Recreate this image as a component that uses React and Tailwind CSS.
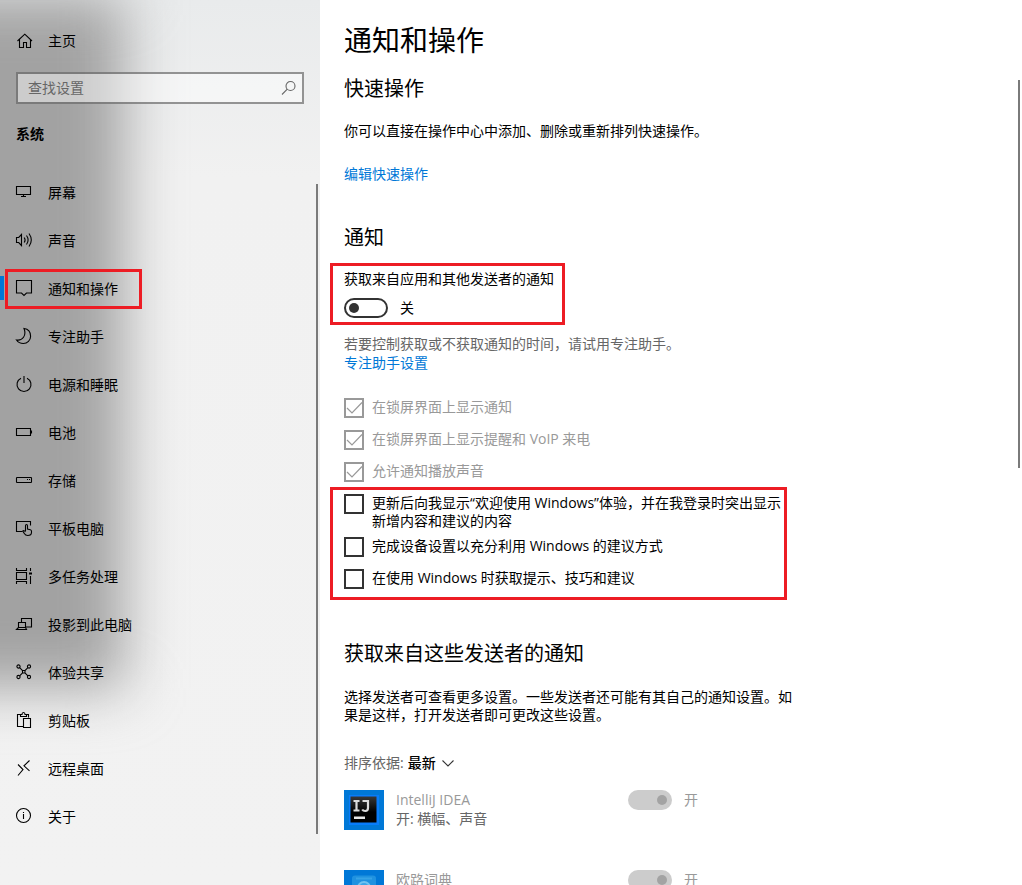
import React from "react";

function Icon({ children, className = "" }) {
  return (
    <svg
      viewBox="0 0 16 16"
      className={`size-4 shrink-0 overflow-visible ${className}`}
      fill="none"
      stroke="currentColor"
      strokeWidth="1.1"
      aria-hidden="true"
    >
      {children}
    </svg>
  );
}

const navItems = [
  {
    label: "屏幕",
    icon: <path d="M.5 2.5h14v8H.5zM7.5 10.5v2M5 12.5h5" />,
  },
  {
    label: "声音",
    icon: (
      <path d="M.5 5.5h2.200L5.500 2.500v11L2.700 10.500H.5zM8.200 5.500q1.800 2.500 0 5M10.500 3.500q3.200 4.500 0 9M13 1.500q4.600 6.500 0 13" />
    ),
  },
  {
    label: "通知和操作",
    current: true,
    icon: <path d="M.5.5h15v12.500h-5L8 15.500 5.500 13H.5z" />,
  },
  {
    label: "专注助手",
    icon: (
      <path d="M8 .5C12 1 14.600 4 14.600 8.200c0 4.300-3.200 7.300-7.300 7.300-2.700 0-5.200-1.200-6.800-3.500C6.500 13 10.800 7.500 8 .5z" />
    ),
  },
  {
    label: "电源和睡眠",
    icon: (
      <>
        <path d="M5 2.200a7 7 0 1 0 6 0" />
        <path d="M8 0v7" />
      </>
    ),
  },
  {
    label: "电池",
    icon: <path d="M.5 4.500h14v7H.5zM15.500 6.500v3" />,
  },
  {
    label: "存储",
    icon: (
      <>
        <rect x=".5" y="5.500" width="15" height="5" rx=".6" />
        <path d="M11 7.500h1M13 7.500h1" />
      </>
    ),
  },
  {
    label: "平板电脑",
    icon: (
      <>
        <path d="M6.500 11.500h-6v-10h14v4" />
        <path d="M9.500 11V5.700q0-1.200 1-1.200t1 1.200v3.300l2.800.7q1.200.3 1.200 1.500v1q0 3.300-3.800 3.300-2.200 0-3.400-2L6.800 11q1.200-1 2.700.8" />
      </>
    ),
  },
  {
    label: "多任务处理",
    icon: (
      <>
        <path d="M.5 0v2.500h10V0M.5 16v-2.500h10V16M.5 4.500h10v7H.500zM14.500 0v3M14.500 8v8" />
        <path d="M13 4.500h3v2h-3z" fill="currentColor" stroke="none" />
      </>
    ),
  },
  {
    label: "投影到此电脑",
    icon: (
      <path d="M5.500 6V2.500h10v8.500H10M2.500 6.500h7v5h-7zM2.500 11.500l-2 2h10l-1-2" />
    ),
  },
  {
    label: "体验共享",
    icon: (
      <>
        <circle cx="2.500" cy="2.500" r="1.600" />
        <circle cx="13" cy="2.500" r="1.600" />
        <circle cx="2.500" cy="13" r="1.600" />
        <circle cx="13" cy="13" r="1.600" />
        <path d="M3.600 3.600l3 3M11.900 3.600l-3 3M3.600 11.900l3-3M11.900 11.900l-3-3M6.500 6.500h2.500v2.500H6.500z" />
      </>
    ),
  },
  {
    label: "剪贴板",
    icon: (
      <path d="M7 14.500H1.500v-12h3V4.500h6V2.500h2v3M4.500 2.500h1.500Q6 .5 7.500.5T9 2.500h1.500M7.500 6.500h7v9h-7z" />
    ),
  },
  {
    label: "远程桌面",
    icon: <path d="M2 4.500l5 5-5 6M13.500.5L8 5.800l5.500 5" />,
  },
  {
    label: "关于",
    icon: (
      <>
        <circle cx="7.500" cy="7.500" r="7" />
        <path d="M7.500 6v5M7.500 4v1" />
      </>
    ),
  },
];

function Sidebar() {
  return (
    <aside className="relative flex w-80 shrink-0 flex-col overflow-hidden bg-linear-to-b from-[#e9ebec] via-[#f1f1f1] via-20% to-[#f2f2f2]">
      <div className="absolute -top-1 -left-24 h-[692px] w-[220px] bg-[#a2a2a2] blur-[28px]" />
      <div className="relative flex flex-col pt-[17px]">
        <a href="#home" className="flex h-12 items-center gap-4 px-4">
          <Icon>
            <path d="M1.500 8L8.800 1.200 16 8M3.500 6.500v8h4v-5h3v5h4v-8" />
          </Icon>
          主页
        </a>
        <label className="mx-4 mt-[7px] flex h-8 items-center border-2 border-black/40 bg-white/45 pr-1.5 pl-2.5">
          <span className="sr-only">查找设置</span>
          <input
            type="text"
            placeholder="查找设置"
            className="h-7 min-w-0 flex-1 bg-transparent pb-0.5 outline-none placeholder:text-[#666]"
          />
          <Icon className="text-[#666]">
            <circle cx="10.500" cy="6" r="4.500" />
            <path d="M7.300 9.200L2 14.500" />
          </Icon>
        </label>
        <h2 className="mt-5 px-4 leading-5 font-bold">系统</h2>
        <nav className="mt-6 flex flex-col">
          {navItems.map((item) => (
            <a
              key={item.label}
              href={`#${item.label}`}
              aria-current={item.current ? "page" : undefined}
              className="relative flex h-12 items-center gap-4 px-4"
            >
              {item.current && (
                <>
                  <span className="absolute top-3 left-0 h-6 w-1 bg-[#0078d7]" />
                  <span className="absolute top-[5px] left-[5px] h-10 w-[137px] border-3 border-[#ed1c24]" />
                </>
              )}
              <Icon>{item.icon}</Icon>
              <span className="pt-0.5">{item.label}</span>
            </a>
          ))}
        </nav>
      </div>
      <div className="absolute top-[184px] right-0.5 h-[650px] w-0.5 bg-[#7a7a7a]" />
    </aside>
  );
}

function CheckRow({ id, label, checked = false, disabled = false }) {
  return (
    <div className="flex items-start gap-2">
      <span className="grid size-5 shrink-0">
        <input
          id={id}
          type="checkbox"
          defaultChecked={checked}
          disabled={disabled}
          className="peer col-start-1 row-start-1 size-5 appearance-none border-2 border-[#333] disabled:border-[#999]"
        />
        <svg
          viewBox="0 0 20 20"
          className="pointer-events-none invisible col-start-1 row-start-1 size-5 text-[#999] peer-checked:visible"
          fill="none"
          stroke="currentColor"
          strokeWidth="1.200"
          aria-hidden="true"
        >
          <path d="M3 10l5 5L18 4.500" />
        </svg>
      </span>
      <label
        htmlFor={id}
        className={disabled ? "leading-[18px] text-[#999]" : "leading-[18px]"}
      >
        {label}
      </label>
    </div>
  );
}

function SenderRow({ name, detail, logo }) {
  return (
    <li className="flex h-20 items-start">
      {logo}
      <div className="flex w-[244px] flex-col pl-3 leading-[19px]">
        <span className="text-[#999]">{name}</span>
        <span className="text-[#666]">{detail}</span>
      </div>
      <div className="flex h-5 items-center gap-3 text-[#999]">
        <button
          type="button"
          role="switch"
          aria-checked="true"
          aria-label={name}
          disabled
          className="flex h-5 w-11 items-center justify-end rounded-full bg-[#ccc] pr-[5px]"
        >
          <span className="size-2.5 rounded-full bg-[#a3a3a3]" />
        </button>
        开
      </div>
    </li>
  );
}

const ideaLogo = (
  <svg viewBox="0 0 40 40" className="size-10 shrink-0 bg-[#0078d7]" aria-hidden="true">
    <defs>
      <linearGradient id="idea" x1="0" y1="0" x2="0" y2="1">
        <stop offset="0" stopColor="#383838" />
        <stop offset=".6" stopColor="#000" />
      </linearGradient>
    </defs>
    <path d="M5 5h30v30H5z" fill="#087cfa" />
    <path d="M6.500 6.500h26v26h-26z" fill="url(#idea)" />
    <path
      d="M9.500 11h6M12.500 11v9.500M9.500 20.500h6M18.500 11h5.500v7q0 3-2.800 3-2 0-3-1.500"
      fill="none"
      stroke="#dcdcdc"
      strokeWidth="2.200"
    />
    <path d="M10 26.500h11v2.500H10z" fill="#e8e8e8" />
  </svg>
);

const dictLogo = (
  <svg viewBox="0 0 40 40" className="size-10 shrink-0 bg-[#0078d7]" aria-hidden="true">
    <rect x="8" y="5.500" width="24" height="28" rx="3" fill="#1f92e0" />
    <path d="M12 8.500h16" stroke="#35a3e6" strokeWidth="2" />
    <circle cx="20" cy="18" r="6" fill="#3ba6e8" stroke="#6fc2f0" strokeWidth="2" />
    <path d="M14 16h13" stroke="#2b9be3" strokeWidth="2" />
  </svg>
);

export default function App() {
  return (
    <div className="flex h-screen overflow-hidden bg-white font-['Open_Sans','Noto_Sans_CJK_SC',sans-serif] text-sm text-black">
      <Sidebar />
      <main className="relative flex min-w-0 flex-1 flex-col px-6 pt-5 leading-[18px]">
        <h1 className="text-[28px] leading-10">通知和操作</h1>
        <h2 className="mt-[15px] text-xl leading-7">快速操作</h2>
        <p className="mt-[19px]">你可以直接在操作中心中添加、删除或重新排列快速操作。</p>
        <a href="#quick" className="mt-[25px] self-start text-[#0078d7]">
          编辑快速操作
        </a>

        <h2 className="mt-[41px] text-xl leading-7">通知</h2>
        <div className="mt-[11px] -ml-3.5 w-[235px] border-3 border-[#ed1c24] px-[11px] py-1">
          <p id="notify" className="whitespace-nowrap">
            获取来自应用和其他发送者的通知
          </p>
          <div className="mt-2.5 flex h-5 items-center gap-3">
            <button
              type="button"
              role="switch"
              aria-checked="false"
              aria-labelledby="notify"
              className="flex h-5 w-11 items-center rounded-full border-2 border-[#333] pl-[3px]"
            >
              <span className="size-2.5 rounded-full bg-[#333]" />
            </button>
            关
          </div>
        </div>
        <p className="mt-2.5 text-[#666]">
          若要控制获取或不获取通知的时间，请试用专注助手。
        </p>
        <a href="#focus" className="mt-px self-start text-[#0078d7]">
          专注助手设置
        </a>

        <div className="mt-[26px] flex flex-col gap-3">
          <CheckRow id="lock" label="在锁屏界面上显示通知" checked disabled />
          <CheckRow id="voip" label="在锁屏界面上显示提醒和 VoIP 来电" checked disabled />
          <CheckRow id="sound" label="允许通知播放声音" checked disabled />
        </div>
        <div className="mt-[5px] -ml-3.5 flex w-[457px] flex-col border-3 border-[#ed1c24] pt-1 pr-0.5 pb-2 pl-[11px]">
          <CheckRow
            id="welcome"
            label="更新后向我显示“欢迎使用 Windows”体验，并在我登录时突出显示新增内容和建议的内容"
          />
          <div className="mt-[7px] flex flex-col gap-3">
            <CheckRow id="finish" label="完成设备设置以充分利用 Windows 的建议方式" />
            <CheckRow id="tips" label="在使用 Windows 时获取提示、技巧和建议" />
          </div>
        </div>

        <h2 className="mt-10 text-xl leading-7">获取来自这些发送者的通知</h2>
        <p className="mt-5 max-w-[452px]">
          选择发送者可查看更多设置。一些发送者还可能有其自己的通知设置。如果是这样，打开发送者即可更改这些设置。
        </p>
        <div className="mt-[30px] flex items-center">
          <label htmlFor="sort" className="mr-1 text-[#666]">
            排序依据:
          </label>
          <select id="sort" className="appearance-none bg-transparent font-medium">
            <option>最新</option>
          </select>
          <Icon className="pointer-events-none ml-1 text-[#333]">
            <path d="M2.500 5.500l5.500 5.500 5.500-5.500" />
          </Icon>
        </div>
        <ul className="mt-[18px] flex flex-col">
          <SenderRow name="IntelliJ IDEA" detail="开: 横幅、声音" logo={ideaLogo} />
          <SenderRow name="欧路词典" detail="开: 横幅、声音" logo={dictLogo} />
        </ul>
        <div className="absolute top-20 right-0.5 h-[388px] w-0.5 bg-[#7a7a7a]" />
      </main>
    </div>
  );
}
